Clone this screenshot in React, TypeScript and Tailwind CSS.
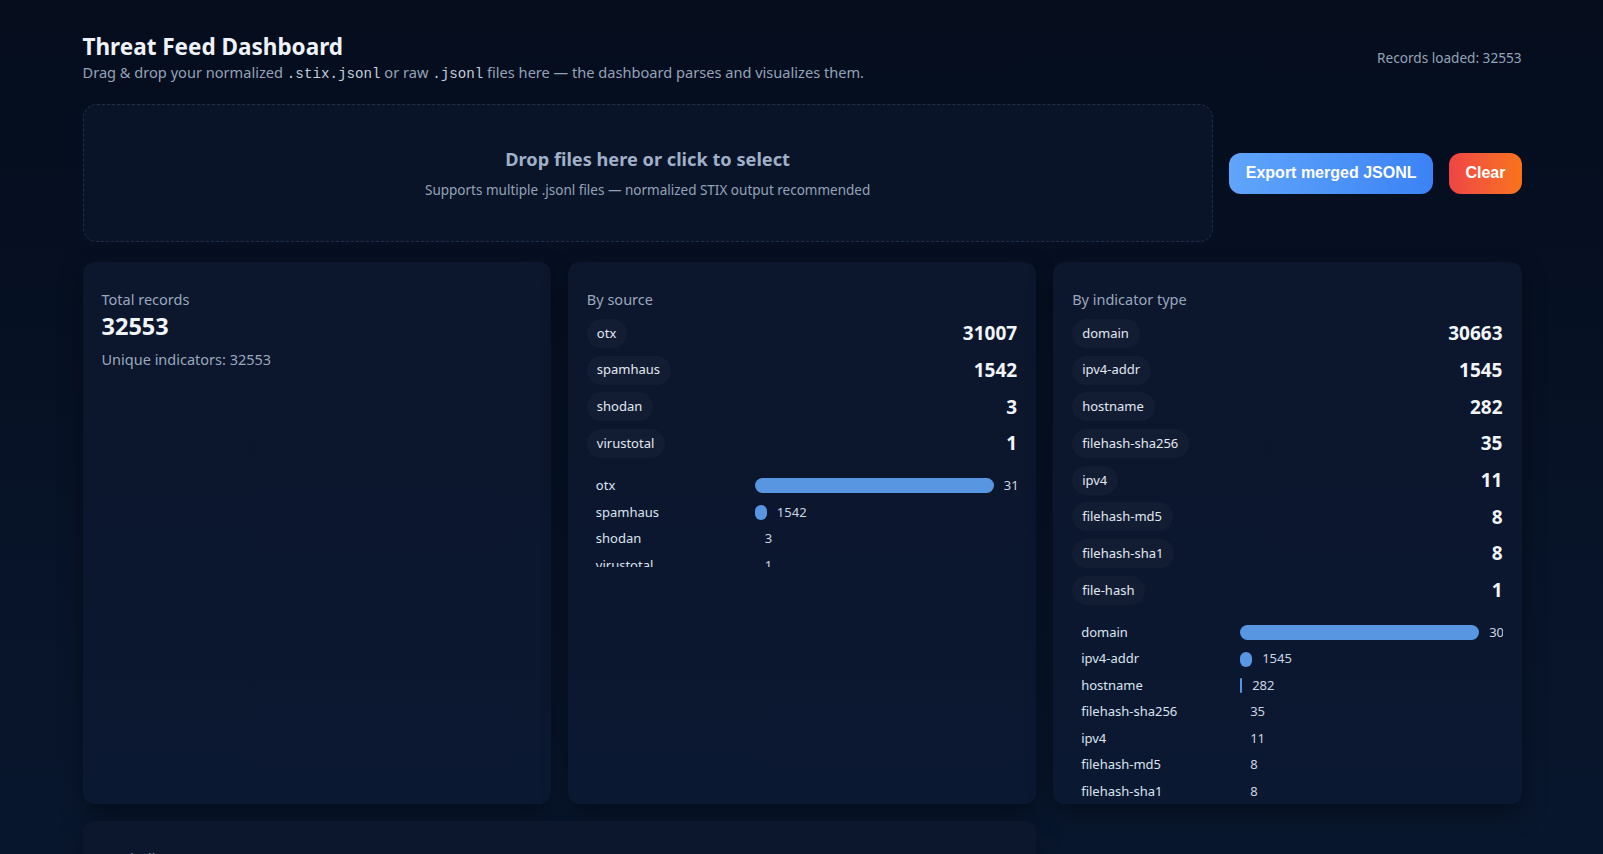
import React from "react";

type Item = { name: string; count: number };

const sources: Item[] = [
  { name: "otx", count: 31007 },
  { name: "spamhaus", count: 1542 },
  { name: "shodan", count: 3 },
  { name: "virustotal", count: 1 },
];

const types: Item[] = [
  { name: "domain", count: 30663 },
  { name: "ipv4-addr", count: 1545 },
  { name: "hostname", count: 282 },
  { name: "filehash-sha256", count: 35 },
  { name: "ipv4", count: 11 },
  { name: "filehash-md5", count: 8 },
  { name: "filehash-sha1", count: 8 },
  { name: "file-hash", count: 1 },
];

const BAR_MAX = 239;

const Pills = ({ items }: { items: Item[] }) => (
  <div className="mt-[10px] flex flex-col gap-[7.7px]">
    {items.map((it) => (
      <div key={it.name} className="flex items-center justify-between">
        <span className="flex h-[29px] items-center rounded-full bg-[#121d34] pl-[10px] pr-[11px] text-[13px] text-[#e2e8f0]">
          {it.name}
        </span>
        <span className="text-[19px] font-bold text-[#f1f5f9]">{it.count}</span>
      </div>
    ))}
  </div>
);

const BarChart = ({ items, height }: { items: Item[]; height?: string }) => {
  const max = Math.max(...items.map((i) => i.count));
  return (
    <div className={`mt-[14.5px] overflow-hidden ${height ?? ""}`}>
      {items.map((it) => (
        <div key={it.name} className="flex h-[26.5px] items-center pl-[9px] text-[13px]">
          <span className="w-[159px] shrink-0 text-[#dbe4f0]">{it.name}</span>
          <div
            className="h-[15px] shrink-0 rounded-full bg-[#5896e2]"
            style={{ width: Math.round((it.count / max) * BAR_MAX) }}
          />
          <span className="ml-[10px] whitespace-nowrap text-[#cbd5e1]">
            {it.count}
          </span>
        </div>
      ))}
    </div>
  );
};

const Card = ({
  title,
  children,
  className,
}: {
  title: string;
  children?: React.ReactNode;
  className?: string;
}) => (
  <div
    className={`h-[542px] overflow-hidden rounded-[12px] bg-gradient-to-b from-[#0c162c] to-[#0b1831] px-[19px] pt-[27px] shadow-[0_10px_24px_rgba(0,0,0,0.35)] ${className ?? ""}`}
  >
    <div className="text-[14.5px] leading-[20px] text-[#9aa8bd]">{title}</div>
    {children}
  </div>
);

export default function App() {
  return (
    <div
      className="min-h-screen bg-gradient-to-b from-[#050d1d] to-[#0a1a34] text-[#e6edf7]"
      style={{ fontFamily: '"Noto Sans", "Open Sans", sans-serif' }}
    >
      <div className="mx-auto w-[1440px] pt-[33px] pl-[1px]">
        <header className="flex items-center justify-between">
          <div>
            <h1 className="text-[22.5px] font-bold leading-[28px] text-[#eef3fa]">
              Threat Feed Dashboard
            </h1>
            <p className="mt-[1px] text-[14.6px] leading-[20px] text-[#94a3b8]">
              Drag &amp; drop your normalized{" "}
              <code className="font-['Liberation_Mono',monospace] text-[14.2px] text-[#c3cedd]">
                .stix.jsonl
              </code>{" "}
              or raw{" "}
              <code className="font-['Liberation_Mono',monospace] text-[14.2px] text-[#c3cedd]">
                .jsonl
              </code>{" "}
              files here — the dashboard parses and visualizes them.
            </p>
          </div>
          <div className="text-[13.6px] text-[#94a3b8]">Records loaded: 32553</div>
        </header>

        <div className="mt-[20px] flex items-center gap-4">
          <div className="flex h-[138px] flex-1 flex-col items-center justify-center rounded-[14px] border border-dashed border-[#212e47] bg-[#0a1429]">
            <div className="text-[18.2px] font-bold text-[#9fb0c8]">
              Drop files here or click to select
            </div>
            <div className="mt-[7px] text-[13.5px] text-[#94a3b8]">
              Supports multiple .jsonl files — normalized STIX output recommended
            </div>
          </div>
          <button className="h-[41px] rounded-[12px] bg-gradient-to-r from-[#60a5fa] to-[#3b82f6] px-[17px] font-['Liberation_Sans',Arial,sans-serif] text-[16px] font-bold text-white">
            Export merged JSONL
          </button>
          <button className="h-[41px] rounded-[12px] bg-gradient-to-r from-[#ef4444] to-[#f97316] px-[16px] font-['Liberation_Sans',Arial,sans-serif] text-[16px] font-bold text-white">
            Clear
          </button>
        </div>

        <div className="mt-[20px] grid grid-cols-3 gap-x-[17px] gap-y-[17px] pb-10">
          <Card title="Total records">
            <div className="mt-[2px] text-[23.5px] font-bold leading-[30px] text-[#f1f5f9]">
              32553
            </div>
            <div className="mt-[8px] text-[14.5px] leading-[20px] text-[#9aa8bd]">
              Unique indicators: 32553
            </div>
          </Card>
          <Card title="By source">
            <Pills items={sources} />
            <BarChart items={sources} height="h-[94px]" />
          </Card>
          <Card title="By indicator type">
            <Pills items={types} />
            <BarChart items={types} />
          </Card>
          <Card title="Top indicators" className="col-span-2 !h-[300px]" />
        </div>
      </div>
    </div>
  );
}
